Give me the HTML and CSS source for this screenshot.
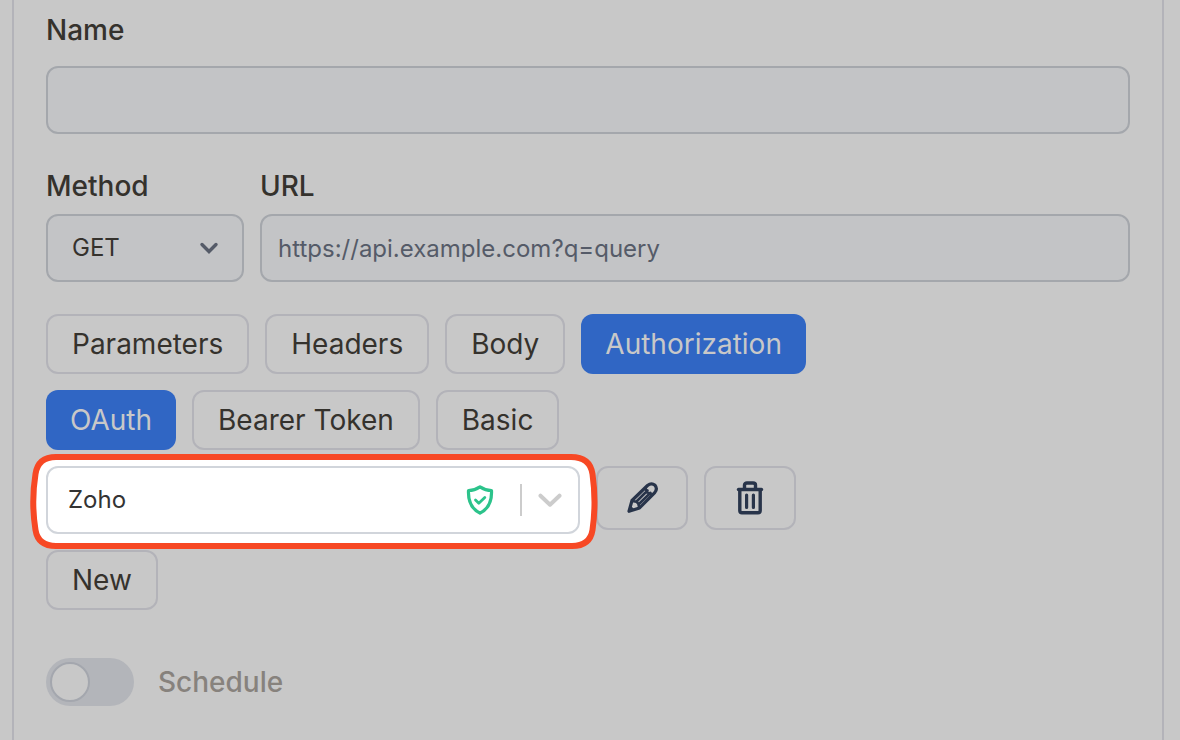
FILE: index.html
```
<!DOCTYPE html>
<html lang="en">
<head>
<meta charset="utf-8">
<title>API request</title>
<link rel="stylesheet" href="styles.css">
</head>
<body>
<form class="card">
  <div class="field field-name">
    <label class="label" for="name">Name</label>
    <input class="control" id="name" type="text">
  </div>

  <div class="request">
    <div class="field">
      <label class="label" for="method">Method</label>
      <div class="select-wrap">
        <select class="control method" id="method"><option>GET</option><option>POST</option><option>PUT</option></select>
        <svg class="method-arrow" viewBox="0 0 20 12" aria-hidden="true"><path d="M3 2.500l7 7 7-7" fill="none" stroke="currentColor" stroke-width="3.400" stroke-linecap="round" stroke-linejoin="miter"/></svg>
      </div>
    </div>
    <div class="field">
      <label class="label" for="url">URL</label>
      <input class="control" id="url" type="text" placeholder="https://api.example.com?q=query">
    </div>
  </div>

  <div class="row">
    <button class="btn" type="button">Parameters</button>
    <button class="btn" type="button">Headers</button>
    <button class="btn" type="button">Body</button>
    <button class="btn btn-active" type="button">Authorization</button>
  </div>
  <div class="row">
    <button class="btn btn-active" type="button">OAuth</button>
    <button class="btn" type="button">Bearer Token</button>
    <button class="btn" type="button">Basic</button>
  </div>

  <div class="row connection-row">
    <div class="connection">
      <svg class="highlight" viewBox="0 0 568 96" preserveAspectRatio="none" aria-hidden="true"><path d="M26 3H541Q560 3 562.500 20Q566.500 48 562.500 76Q560 92 542 92H26Q8 92 5.500 76Q1 48 5.500 20Q8 3 26 3Z" fill="#fff" stroke="#f74824" stroke-width="6"/></svg>
      <select class="control connection-select" aria-label="Connection"><option>Zoho</option></select>
      <div class="indicators">
        <svg class="shield" viewBox="0 0 30 32" aria-hidden="true"><path d="M15 2.800Q20.500 6.500 26.500 6.500C27 17 24 24.500 15 29.200C6 24.500 3 17 3.500 6.500Q9.500 6.500 15 2.800Z" fill="none" stroke="currentColor" stroke-width="3.200" stroke-linejoin="round"/><path d="M10.500 16l3.300 3.200 6-5.700" fill="none" stroke="currentColor" stroke-width="2.800" stroke-linecap="round" stroke-linejoin="round"/></svg>
        <span class="separator"></span>
        <svg class="arrow" viewBox="0 0 24 16" aria-hidden="true"><path d="M2.500 3.700l9.500 9 9.500-9" fill="none" stroke="currentColor" stroke-width="4" stroke-linecap="round" stroke-linejoin="round"/></svg>
      </div>
    </div>
    <button class="btn icon-btn" type="button" aria-label="Edit">
      <svg class="icon" viewBox="0 0 36 36" aria-hidden="true" fill="none" stroke="currentColor" stroke-linecap="round" stroke-linejoin="round"><path stroke-width="3.200" d="M5 31.300L8 20.500L23.500 5.500Q27.500 2.200 31 5.300Q34 9 30.500 12.800L15.500 28Z"/><path stroke-width="2.600" d="M8.500 21l3.800.7 2 2 1 4M12.500 21.500L23.500 10.500M15 24L26.500 12.800M21.500 8Q22 13.500 28 14.500"/><path fill="currentColor" stroke="none" d="M4 32l2-7 5 5z"/></svg>
    </button>
    <button class="btn icon-btn" type="button" aria-label="Delete">
      <svg class="icon" viewBox="0 0 36 36" aria-hidden="true" fill="none" stroke="currentColor" stroke-width="3.400"><path stroke-linecap="round" d="M6.500 9.500H29.500"/><path stroke-linejoin="round" d="M12.500 9V5Q12.500 3 15 3H21Q23.500 3 23.500 5V9M7.800 10V30.500Q7.800 32.800 10 32.800H26Q28.200 32.800 28.200 30.500V10"/><path stroke-linecap="round" stroke-width="3.200" d="M14.600 15V27.500M21.400 15V27.500"/></svg>
    </button>
  </div>
  <div class="row new-row">
    <button class="btn" type="button">New</button>
  </div>

  <label class="schedule"><input class="toggle" type="checkbox" role="switch">Schedule</label>
</form>
</body>
</html>
```
FILE: styles.css
```
*,
*::before {
  box-sizing: border-box;
}

body {
  margin: 0;
  background: #c8c8c8;
  color: #35322d;
  font-family: Inter, "Liberation Sans", sans-serif;
  font-size: 28px;
  line-height: 40px;
}

.card {
  min-height: 100vh;
  margin: 0 16px 0 12px;
  padding: 10px 32px 34px;
  border: solid #b3b3b9;
  border-width: 0 2px;
}

.field {
  display: flex;
  flex-direction: column;
  gap: 8px;
}

.field-name { gap: 16px; }

.label { font-weight: 500; }

.control {
  display: block;
  width: 100%;
  height: 68px;
  margin: 0;
  padding: 0 16px;
  border: 2px solid #a4a7ac;
  border-radius: 12px;
  background: #c3c4c6;
  color: #35322d;
  font: 24px/32px Inter, "Liberation Sans", sans-serif;
  appearance: none;
}

.control::placeholder {
  color: #555b68;
  opacity: 1;
}

.request {
  display: grid;
  grid-template-columns: 198px 1fr;
  gap: 16px;
  margin: 32px 0;
}

.select-wrap { position: relative; }

.control.method { padding: 0 24px; }

.method-arrow {
  position: absolute;
  top: 28px;
  right: 25px;
  width: 20px;
  height: 12px;
  color: #555b68;
  pointer-events: none;
}

.row {
  display: flex;
  align-items: flex-start;
  gap: 16px;
  margin-bottom: 16px;
}

.btn {
  height: 60px;
  padding: 0 24px;
  border: 2px solid #b3b3b9;
  border-radius: 12px;
  background: transparent;
  color: #35322d;
  font: 400 28px/40px Inter, "Liberation Sans", sans-serif;
}

.btn-active {
  border: 0;
  background: #3066c4;
  color: #c8c8c8;
}

.connection {
  position: relative;
  z-index: 1;
  flex: 0 1 534px;
}

.highlight {
  position: absolute;
  top: -12px;
  left: -16px;
  width: calc(100% + 34px);
  height: 96px;
}

.control.connection-select {
  position: relative;
  padding: 0 20px;
  border-color: #d1d5db;
  background: #fff;
  color: #333;
}

.indicators {
  position: absolute;
  inset: 0 18px 0 auto;
  display: flex;
  align-items: center;
  pointer-events: none;
}

.shield {
  width: 30px;
  height: 32px;
  color: #2cc38b;
}

.separator {
  width: 2px;
  height: 32px;
  margin: 0 16px 0 25px;
  background: #ccc;
}

.arrow {
  width: 24px;
  height: 16px;
  color: #ccc;
}

.icon-btn {
  display: flex;
  align-items: center;
  justify-content: center;
  width: 92px;
  height: 64px;
  padding: 0;
  color: #28344a;
}

.icon {
  width: 36px;
  height: 36px;
}

.new-row { margin-bottom: 48px; }

.schedule {
  display: flex;
  align-items: center;
  gap: 24px;
  width: fit-content;
  color: #87827d;
  font-weight: 500;
}

.toggle {
  display: flex;
  align-items: center;
  width: 88px;
  height: 48px;
  margin: 0;
  padding: 0 4px;
  border-radius: 24px;
  background: #b3b5ba;
  appearance: none;
}

.toggle::before {
  width: 40px;
  height: 40px;
  border: 2px solid #a4a7ae;
  border-radius: 50%;
  background: #c8c8c8;
  content: "";
}

.toggle:checked { background: #3066c4; }
.toggle:checked::before { margin-left: auto; }
```
